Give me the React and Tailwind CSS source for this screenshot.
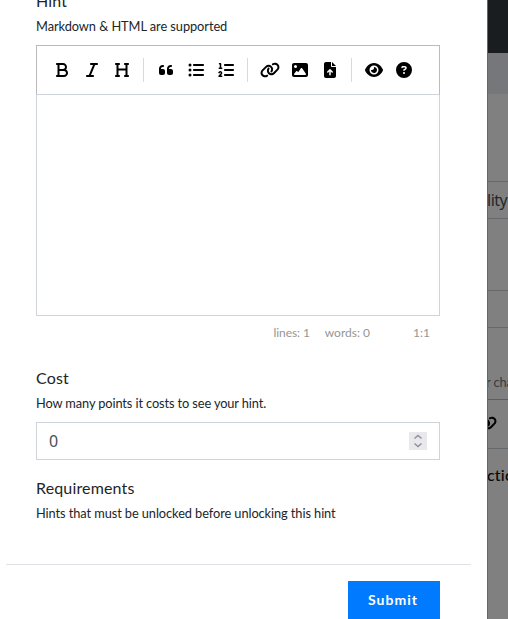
import React from "react";
import {
  FaBold, FaItalic, FaHeading, FaQuoteLeft, FaListUl, FaListOl,
  FaLink, FaImage, FaFileArrowUp, FaEye, FaCircleQuestion,
} from "react-icons/fa6";

const groups = [
  [FaBold, FaItalic, FaHeading],
  [FaQuoteLeft, FaListUl, FaListOl],
  [FaLink, FaImage, FaFileArrowUp],
  [FaEye, FaCircleQuestion],
];

function Toolbar() {
  return (
    <div className="flex h-[50px] items-center border border-[#bbb] border-b-[#ced4da] pl-2.5">
      {groups.map((icons, g) => (
        <React.Fragment key={g}>
          {g > 0 && <span className="mr-[7px] ml-1.5 h-6 w-px bg-[#d9d9d9]" />}
          {icons.map((Icon, i) => (
            <button key={i} type="button" className="flex h-[30px] w-[30px] items-center justify-center text-black">
              <Icon size={16} className={Icon === FaEye ? "w-[18px]" : Icon === FaLink ? "h-4 w-5" : ""} />
            </button>
          ))}
        </React.Fragment>
      ))}
    </div>
  );
}

function Backdrop() {
  return (
    <div className="flex w-[21px] flex-col overflow-hidden border-l border-[#666] bg-[#808080] whitespace-nowrap">
      <div className="h-[53px] shrink-0 bg-[#1a1d20]" />
      <div className="h-[41px] shrink-0 bg-[#75777a]" />
      <div className="h-[87px] shrink-0" />
      <div className="flex h-[38px] shrink-0 items-center border-y border-[#676a6d] font-['Noto_Sans',sans-serif] text-[16px] tracking-[-0.5px] text-[#25282b]">
        <span className="-ml-[1px]">lity</span>
      </div>
      <div className="h-[71px] shrink-0" />
      <div className="h-[38px] shrink-0 border-y border-[#676a6d]" />
      <div className="flex h-[71px] shrink-0 items-end pb-[7px] text-[12.8px] tracking-[-0.1px] text-[#363b3f]">
        <span className="-ml-[2px]">r challenge</span>
      </div>
      <div className="flex h-[50px] shrink-0 items-center border-t border-b border-t-[#5e5e5e] border-b-[#676a6d]">
        <FaLink size={16} className="-ml-[11px] h-4 w-5 shrink-0 text-black" />
      </div>
      <div className="mt-[14px] text-[16px] leading-6 font-medium tracking-[0.2px] text-[#080909]">
        <span className="-ml-[1px]">ction</span>
      </div>
    </div>
  );
}

function Label({ title, help, helpClass = "tracking-[-0.08px]" }) {
  return (
    <div>
      <div className="text-[16px] leading-6 tracking-[0.15px]">{title}</div>
      <div className={`text-[12.8px] leading-[26px] ${helpClass}`}>{help}</div>
    </div>
  );
}

export default function App() {
  return (
    <div className="flex h-[619px] w-[508px] overflow-hidden bg-white font-['Lato',sans-serif] text-[#212529]">
      <main className="flex w-[487px] shrink-0 flex-col">
        <div className="mr-[47px] ml-9">
          <div className="-mt-[11px]">
            <Label title="Hint" help="Markdown & HTML are supported" helpClass="tracking-[-0.06px]" />
          </div>
          <div className="mt-1.5">
            <Toolbar />
            <div className="h-[221px] border border-t-0 border-[#ced4da]" />
          </div>
          <div className="flex h-[34px] items-center justify-end pr-2.5 text-[12px] text-[#959694]">
            <span className="tracking-[-0.1px]">lines: 1</span>
            <span className="ml-[15px]">words: 0</span>
            <span className="ml-[15px] w-[45px] text-right">1:1</span>
          </div>
          <div className="mt-4">
            <Label title="Cost" help="How many points it costs to see your hint." helpClass="tracking-[-0.11px]" />
          </div>
          <div className="mt-1.5 flex h-[38px] items-center justify-between border border-[#ced4da] pr-3 pl-3 text-[16px] text-[#495057]">
            <span className="font-['Noto_Sans',sans-serif]">0</span>
            <span className="flex h-[18px] w-[18px] items-center justify-center bg-[#e9e9ed]">
              <svg width="18" height="18" viewBox="0 0 18 18" fill="none" stroke="#8f8f9d" strokeWidth="1.5">
                <path d="M5.5 6.5 9 3.5l3.5 3M5.5 11.5 9 14.5l3.5-3" />
              </svg>
            </span>
          </div>
          <div className="mt-4">
            <Label title="Requirements" help="Hints that must be unlocked before unlocking this hint" />
          </div>
        </div>
        <div className="mt-[38px] mr-4 ml-1.5 border-t border-[#dee2e6]" />
        <div className="flex justify-end pt-4 pr-[47px]">
          <button type="button" className="h-[38px] w-[92px] bg-[#007bff] pr-0.5 pb-0.5 text-[14px] font-bold tracking-[1px] text-white">Submit</button>
        </div>
      </main>
      <Backdrop />
    </div>
  );
}
